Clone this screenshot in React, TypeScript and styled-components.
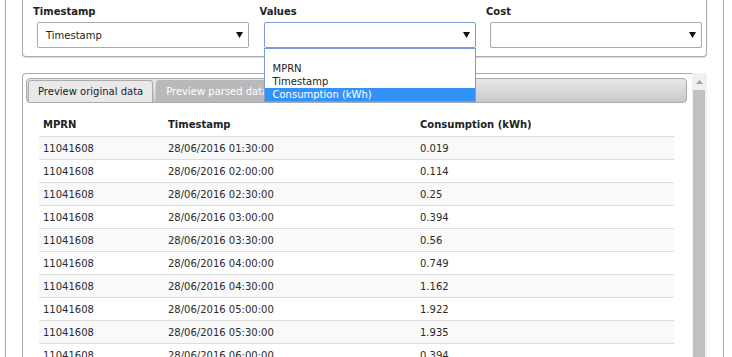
import React from 'react';
import styled, { createGlobalStyle } from 'styled-components';

const GlobalStyle = createGlobalStyle`
  html, body {
    margin: 0;
    padding: 0;
    background: #fff;
  }
  body {
    font-family: "DejaVu Sans", Verdana, sans-serif;
    font-size: 10px;
    color: #333;
  }
`;

const Page = styled.div`
  margin-left: 5px;
  width: 719px;
  height: 357px;
  box-sizing: border-box;
  overflow: hidden;
  border-left: 1px solid #a9a9a9;
  border-right: 1px solid #a9a9a9;
  padding: 0 16px;
`;

const FieldPanel = styled.div`
  position: relative;
  z-index: 2;
  display: grid;
  grid-template-columns: repeat(3, 226.5px);
  padding: 6px 10px 8px;
  border: 1px solid #aaa;
  border-top: none;
  border-radius: 0 0 4px 4px;
  box-shadow: 0 1px 1px rgba(0, 0, 0, 0.15);
`;

const Field = styled.div`
  display: flex;
  flex-direction: column;
`;

const Label = styled.div`
  font-weight: bold;
  line-height: 12px;
  color: #222;
  margin-bottom: 4px;
`;

const Select = styled<any>('div')`
  position: relative;
  margin-left: 4px;
  width: 212px;
  height: 26px;
  box-sizing: border-box;
  display: flex;
  align-items: center;
  justify-content: space-between;
  padding: 0 5px 0 8px;
  background: #fff;
  border: 1px solid ${props => (props.focused ? '#7b9bd6' : '#a9a9a9')};
  border-radius: 2px;
  color: #222;
`;

const Arrow = () => (
  <svg width="7" height="6" viewBox="0 0 7 6">
    <polygon points="0,0 7,0 3.5,6" fill="#111" />
  </svg>
);

const OptionList = styled.div`
  position: absolute;
  top: calc(100% + 1px);
  left: -1px;
  width: 212px;
  box-sizing: border-box;
  background: #fff;
  border: 1px solid #7b9bd6;
`;

const Option = styled<any>('div')`
  height: 13px;
  line-height: 13px;
  padding-left: 8px;
  color: ${props => (props.selected ? '#fff' : '#222')};
  background: ${props => (props.selected ? '#3392fa' : 'transparent')};
  white-space: nowrap;
`;

const DataBox = styled.div`
  display: flex;
  margin-top: 16px;
  height: 300px;
`;

const Content = styled.div`
  flex: 1;
  border-top: 1px solid #aaa;
  border-left: 1px solid #aaa;
  border-top-left-radius: 4px;
  padding: 4px 5px 0 3px;
`;

const TabBar = styled.div`
  display: flex;
  align-items: flex-end;
  gap: 3px;
  height: 25px;
  box-sizing: border-box;
  padding-left: 1px;
  border: 1px solid #aaa;
  border-radius: 4px;
  background: linear-gradient(#e8e8e8, #c9c9c9);
`;

const Tab = styled<any>('div')`
  height: 22px;
  box-sizing: border-box;
  line-height: 21px;
  padding: 0 9px;
  white-space: nowrap;
  border: 1px solid ${props => (props.active ? '#aaa' : '#b9b9b9')};
  border-bottom: none;
  border-radius: 3px 3px 0 0;
  background: ${props => (props.active ? '#e9e9e9' : '#b9b9b9')};
  color: ${props => (props.active ? '#222' : '#fff')};
`;

const Table = styled.table`
  margin: 10px 13px 0 13px;
  width: 635px;
  border-collapse: collapse;
  table-layout: fixed;
`;

const HeadCell = styled.th`
  height: 23px;
  padding: 0 4px;
  text-align: left;
  font-weight: bold;
  color: #222;
`;

const Row = styled<any>('tr')`
  background: ${props => (props.striped ? '#f9f9f9' : '#fff')};
  border-top: 1px solid #ddd;
`;

const Cell = styled.td`
  height: 22px;
  padding: 0 4px;
  color: #2a2a2a;
  white-space: nowrap;
`;

const ScrollBar = styled.div`
  width: 16px;
  display: flex;
  flex-direction: column;
  background: #f0f0f0;
`;

const ScrollArrow = styled.div`
  height: 17px;
  display: flex;
  align-items: center;
  justify-content: center;
`;

const ScrollThumb = styled.div`
  flex: 1;
  margin: 0 2px 0 1px;
  background: #c1c1c1;
`;

const rows = [
  ['01:30:00', '0.019'],
  ['02:00:00', '0.114'],
  ['02:30:00', '0.25'],
  ['03:00:00', '0.394'],
  ['03:30:00', '0.56'],
  ['04:00:00', '0.749'],
  ['04:30:00', '1.162'],
  ['05:00:00', '1.922'],
  ['05:30:00', '1.935'],
  ['06:00:00', '0.394'],
];

const App = () => {
  return (
    <>
      <GlobalStyle />
      <Page>
        <FieldPanel>
          <Field>
            <Label>Timestamp</Label>
            <Select>
              <span>Timestamp</span>
              <Arrow />
            </Select>
          </Field>
          <Field>
            <Label>Values</Label>
            <Select focused>
              <span />
              <Arrow />
              <OptionList>
                <Option>&nbsp;</Option>
                <Option>MPRN</Option>
                <Option>Timestamp</Option>
                <Option selected>Consumption (kWh)</Option>
              </OptionList>
            </Select>
          </Field>
          <Field>
            <Label>Cost</Label>
            <Select>
              <span />
              <Arrow />
            </Select>
          </Field>
        </FieldPanel>
        <DataBox>
          <Content>
            <TabBar>
              <Tab active>Preview original data</Tab>
              <Tab>Preview parsed data</Tab>
            </TabBar>
            <Table>
              <colgroup>
                <col style={{ width: 125 }} />
                <col style={{ width: 252 }} />
                <col />
              </colgroup>
              <thead>
                <tr>
                  <HeadCell>MPRN</HeadCell>
                  <HeadCell>Timestamp</HeadCell>
                  <HeadCell>Consumption (kWh)</HeadCell>
                </tr>
              </thead>
              <tbody>
                {rows.map(([time, value], index) => (
                  <Row key={index} striped={index % 2 === 0}>
                    <Cell>11041608</Cell>
                    <Cell>28/06/2016 {time}</Cell>
                    <Cell>{value}</Cell>
                  </Row>
                ))}
              </tbody>
            </Table>
          </Content>
          <ScrollBar>
            <ScrollArrow>
              <svg width="7" height="4" viewBox="0 0 7 4">
                <polygon points="0,4 7,4 3.5,0" fill="#a3a3a3" />
              </svg>
            </ScrollArrow>
            <ScrollThumb />
          </ScrollBar>
        </DataBox>
      </Page>
    </>
  );
};

export default App;
